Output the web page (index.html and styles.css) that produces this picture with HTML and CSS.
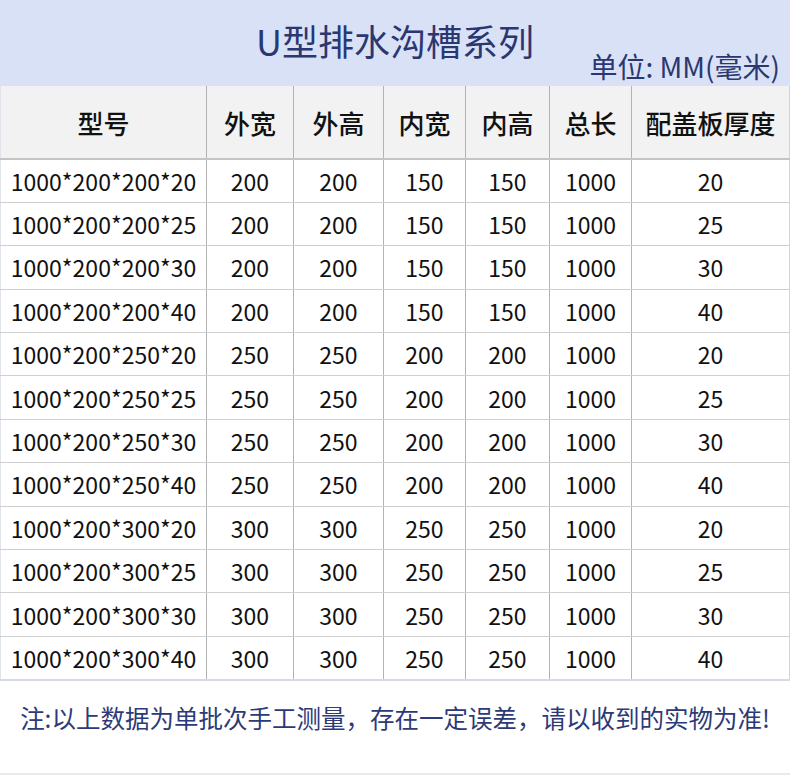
FILE: index.html
```html
<!DOCTYPE html>
<html lang="zh">
<head>
<meta charset="utf-8">
<link rel="stylesheet" href="styles.css">
</head>
<body>
<div class="page">
  <header class="banner">
    <h1 class="title">U型排水沟槽系列</h1>
    <div class="unit">单位: MM(毫米)</div>
  </header>
  <table class="spec">
    <colgroup>
      <col class="c1"><col class="c2"><col class="c3"><col class="c4"><col class="c5"><col class="c6"><col class="c7">
    </colgroup>
    <thead>
      <tr><th>型号</th><th>外宽</th><th>外高</th><th>内宽</th><th>内高</th><th>总长</th><th>配盖板厚度</th></tr>
    </thead>
    <tbody>
      <tr><td>1000*200*200*20</td><td>200</td><td>200</td><td>150</td><td>150</td><td>1000</td><td>20</td></tr>
      <tr><td>1000*200*200*25</td><td>200</td><td>200</td><td>150</td><td>150</td><td>1000</td><td>25</td></tr>
      <tr><td>1000*200*200*30</td><td>200</td><td>200</td><td>150</td><td>150</td><td>1000</td><td>30</td></tr>
      <tr><td>1000*200*200*40</td><td>200</td><td>200</td><td>150</td><td>150</td><td>1000</td><td>40</td></tr>
      <tr><td>1000*200*250*20</td><td>250</td><td>250</td><td>200</td><td>200</td><td>1000</td><td>20</td></tr>
      <tr><td>1000*200*250*25</td><td>250</td><td>250</td><td>200</td><td>200</td><td>1000</td><td>25</td></tr>
      <tr><td>1000*200*250*30</td><td>250</td><td>250</td><td>200</td><td>200</td><td>1000</td><td>30</td></tr>
      <tr><td>1000*200*250*40</td><td>250</td><td>250</td><td>200</td><td>200</td><td>1000</td><td>40</td></tr>
      <tr><td>1000*200*300*20</td><td>300</td><td>300</td><td>250</td><td>250</td><td>1000</td><td>20</td></tr>
      <tr><td>1000*200*300*25</td><td>300</td><td>300</td><td>250</td><td>250</td><td>1000</td><td>25</td></tr>
      <tr><td>1000*200*300*30</td><td>300</td><td>300</td><td>250</td><td>250</td><td>1000</td><td>30</td></tr>
      <tr><td>1000*200*300*40</td><td>300</td><td>300</td><td>250</td><td>250</td><td>1000</td><td>40</td></tr>
    </tbody>
  </table>
  <footer class="note">注:以上数据为单批次手工测量，存在一定误差，请以收到的实物为准!</footer>
</div>
</body>
</html>
```

FILE: styles.css
```css
* { box-sizing: border-box; }
html, body { margin: 0; padding: 0; background: #ffffff; }
body {
  font-family: "Noto Sans CJK SC", "Noto Sans", sans-serif;
  color: #1a1a1a;
}
.page { width: 790px; }

.banner {
  height: 86px;
  background: #d9e1f7;
  display: flex;
  flex-direction: column;
  padding-top: 18px;
}
.title {
  margin: 0;
  font-size: 36px;
  line-height: 44px;
  font-weight: 400;
  color: #2a3770;
  text-align: center;
}
.unit {
  margin-top: -12px;
  padding-right: 10px;
  text-align: right;
  font-size: 28px;
  line-height: 32px;
  color: #2a3770;
}

.spec {
  width: 789px;
  border-collapse: collapse;
  table-layout: fixed;
  border-left: 1px solid #dfe3ea;
}
.c1 { width: 206px; }
.c2 { width: 87px; }
.c3 { width: 90px; }
.c4 { width: 82px; }
.c5 { width: 84px; }
.c6 { width: 82px; }
.c7 { width: 158px; }

.spec th {
  height: 73px;
  background: #f2f2f2;
  font-size: 26px;
  font-weight: 500;
  color: #111111;
  border-right: 1px solid #b3b3b3;
  border-bottom: 2px solid #c4c4c4;
  padding: 0;
  text-align: center;
  vertical-align: middle;
}
.spec td {
  height: 43.4px;
  font-size: 23px;
  font-weight: 400;
  color: #111111;
  text-align: center;
  vertical-align: middle;
  padding: 0;
  border-right: 1px solid #b3b3b3;
  border-bottom: 1px solid #cfcfcf;
}
.spec th:last-child, .spec td:last-child { border-right: 1px solid #cfd3da; }
.spec tbody tr:last-child td { border-bottom: 2px solid #d6dae2; }

.note {
  height: 94px;
  display: flex;
  align-items: center;
  justify-content: center;
  font-size: 24.5px;
  color: #2c3a78;
  border-bottom: 2px solid #e8eaf0;
  padding-bottom: 18px;
}
```
